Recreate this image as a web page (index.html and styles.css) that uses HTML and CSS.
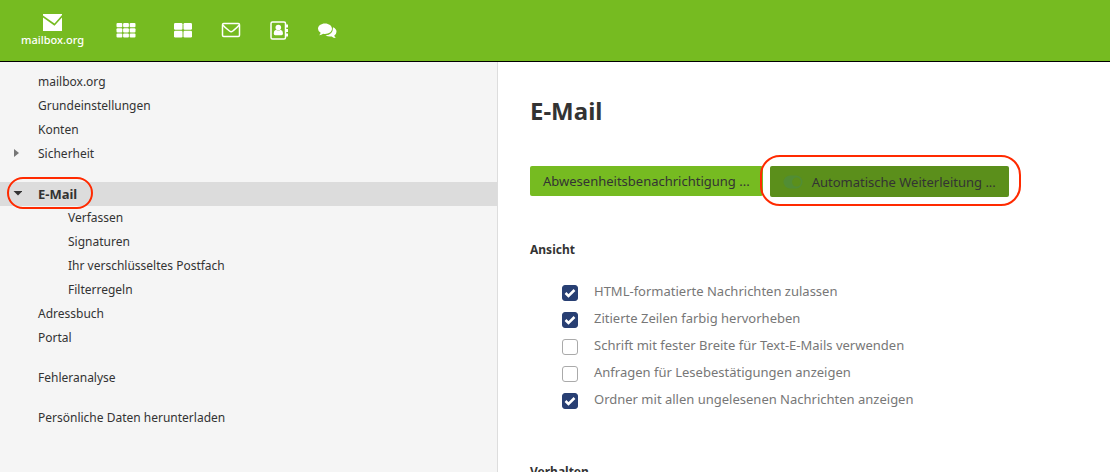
FILE: index.html
```html
<!DOCTYPE html>
<html lang="de">
<head>
<meta charset="utf-8">
<meta name="viewport" content="width=device-width, initial-scale=1">
<title>mailbox.org – E-Mail</title>
<link rel="stylesheet" href="styles.css">
</head>
<body>
<header class="topbar">
  <a class="brand" href="#">
    <svg class="brand-mark" viewBox="0 0 19 17" aria-hidden="true"><path fill="#fff" d="M0 0h19v1L11.500 9.500 0 1.500zM0 3.500l11.500 8.200L19 3.500V17H0z"/></svg>
    <span class="brand-name">mailbox.org</span>
  </a>
  <nav class="apps">
    <button class="app" type="button" aria-label="Apps">
      <svg class="app-icon" viewBox="0 0 20 20" fill="#fff"><rect x="0.500" y="2" width="5.800" height="4.200" rx="1"/><rect x="7.100" y="2" width="5.800" height="4.200" rx="1"/><rect x="13.700" y="2" width="5.800" height="4.200" rx="1"/><rect x="0.500" y="7.200" width="5.800" height="4.200" rx="1"/><rect x="7.100" y="7.200" width="5.800" height="4.200" rx="1"/><rect x="13.700" y="7.200" width="5.800" height="4.200" rx="1"/><rect x="0.500" y="12.400" width="5.800" height="4.200" rx="1"/><rect x="7.100" y="12.400" width="5.800" height="4.200" rx="1"/><rect x="13.700" y="12.400" width="5.800" height="4.200" rx="1"/></svg>
    </button>
    <button class="app" type="button" aria-label="Portal">
      <svg class="app-icon" viewBox="0 0 20 20" fill="#fff"><rect x="1" y="2" width="8.500" height="6.700" rx="1.200"/><rect x="10.500" y="2" width="8.500" height="6.700" rx="1.200"/><rect x="1" y="9.800" width="8.500" height="6.700" rx="1.200"/><rect x="10.500" y="9.800" width="8.500" height="6.700" rx="1.200"/></svg>
    </button>
    <button class="app" type="button" aria-label="E-Mail">
      <svg class="app-icon" viewBox="0 0 20 20" fill="none" stroke="#fff" stroke-width="1.500"><rect x="1.500" y="2.500" width="17" height="13" rx="1.200"/><path d="M1.800 4C4 6.500 6.500 8.300 8.500 10q1.600 1.300 3.200 0C13.700 8.300 16.200 6.500 18.300 4"/></svg>
    </button>
    <button class="app" type="button" aria-label="Adressbuch">
      <svg class="app-icon" viewBox="0 0 20 20" fill="#fff"><rect x="2" y="1" width="14.500" height="17" rx="1.500" fill="none" stroke="#fff" stroke-width="1.500"/><path d="M17 3.500h2v3h-2zM17 8h2v3h-2zM17 12.500h2v3h-2z"/><circle cx="9.300" cy="6.600" r="2.800"/><path d="M7 8.800q2.300 1.800 4.600 0 2.400.5 2.400 3.500 0 2-1.500 2H6.200q-1.500 0-1.500-2 0-3 2.300-3.500z"/></svg>
    </button>
    <button class="app" type="button" aria-label="Chat">
      <svg class="app-icon" viewBox="0 0 20 20" fill="#fff"><path d="M8 2.500c4 0 7 2.300 7 5.200s-3 5.200-7 5.200q-1 0-1.800-.2Q4.500 14 2 14.200q1.300-1 1.600-2.500Q1 10.200 1 7.700C1 4.800 4 2.500 8 2.500z"/><path d="M16 6.200q3.500 1.500 3.500 4.500 0 2.300-2.200 3.700.3 1.500 1.600 2.500-2.500 0-4.200-1.500-3.500.6-6.200-1.200 7.500-.3 7.500-8z"/></svg>
    </button>
  </nav>
</header>
<div class="workspace">
  <nav class="sidebar">
    <ul class="tree">
      <li><a class="item" href="#">mailbox.org</a></li>
      <li><a class="item" href="#">Grundeinstellungen</a></li>
      <li><a class="item" href="#">Konten</a></li>
      <li><a class="item" href="#"><svg class="caret" viewBox="0 0 10 10"><path fill="#777" d="M2 1v8l5-4z"/></svg>Sicherheit</a></li>
    </ul>
    <ul class="tree">
      <li><a class="item item-active" href="#"><svg class="caret" viewBox="0 0 10 10"><path fill="#333" d="M1.500 3h9L6 7.500z"/></svg>E-Mail</a>
        <ul class="subtree">
          <li><a class="item" href="#">Verfassen</a></li>
          <li><a class="item" href="#">Signaturen</a></li>
          <li><a class="item" href="#">Ihr verschlüsseltes Postfach</a></li>
          <li><a class="item" href="#">Filterregeln</a></li>
        </ul>
      </li>
      <li><a class="item" href="#">Adressbuch</a></li>
      <li><a class="item" href="#">Portal</a></li>
    </ul>
    <ul class="tree"><li><a class="item" href="#">Fehleranalyse</a></li></ul>
    <ul class="tree"><li><a class="item" href="#">Persönliche Daten herunterladen</a></li></ul>
  </nav>
  <main class="content">
    <h1 class="title">E-Mail</h1>
    <div class="actions">
      <button class="btn" type="button">Abwesenheitsbenachrichtigung ...</button>
      <span class="marked"><button class="btn btn-dark" type="button"><svg class="toggle" viewBox="0 0 20 14"><rect x=".5" y=".5" width="19" height="13" rx="6.500" fill="#518d34"/><circle cx="13.500" cy="7" r="4.500" fill="#5b8f1b"/></svg>Automatische Weiterleitung ...</button></span>
    </div>
    <section class="group">
      <h2 class="group-title">Ansicht</h2>
      <div class="options">
        <label class="option"><input class="check" type="checkbox" checked>HTML-formatierte Nachrichten zulassen</label>
        <label class="option"><input class="check" type="checkbox" checked>Zitierte Zeilen farbig hervorheben</label>
        <label class="option"><input class="check" type="checkbox">Schrift mit fester Breite für Text-E-Mails verwenden</label>
        <label class="option"><input class="check" type="checkbox">Anfragen für Lesebestätigungen anzeigen</label>
        <label class="option"><input class="check" type="checkbox" checked>Ordner mit allen ungelesenen Nachrichten anzeigen</label>
      </div>
    </section>
    <section class="group">
      <h2 class="group-title">Verhalten</h2>
    </section>
  </main>
</div>
</body>
</html>
```
FILE: styles.css
```css
*, *::before, *::after { box-sizing: border-box; }

body {
  margin: 0;
  height: 100vh;
  display: flex;
  flex-direction: column;
  overflow: hidden;
  background: #fff;
  color: #333;
  font-family: "Noto Sans", "Open Sans", sans-serif;
  font-size: 12px;
}

.topbar {
  display: flex;
  flex: none;
  align-items: center;
  gap: 18px;
  padding: 0 21px;
  height: 62px;
  background: #76bb21;
  border-bottom: 1px solid #000;
}

.brand {
  display: flex;
  flex-direction: column;
  align-items: center;
  gap: 1px;
  color: #fff;
  text-decoration: none;
}

.brand-mark { width: 19px; height: 17px; }

.brand-name {
  font-size: 11px;
  font-weight: 500;
  line-height: 16px;
}

.apps { display: flex; flex: 1; }

.app {
  display: flex;
  align-items: center;
  justify-content: center;
  width: 48px;
  height: 48px;
  padding: 0;
  border: 0;
  background: none;
}

.app:first-child { margin-right: 9px; }

.app-icon { width: 20px; height: 20px; }

.workspace { display: flex; flex: 1; min-height: 0; }

.sidebar {
  display: flex;
  flex: 0 0 498px;
  flex-direction: column;
  gap: 16px;
  padding-top: 8px;
  background: #f5f5f5;
  border-right: 1px solid #ddd;
}

.tree, .subtree { margin: 0; padding: 0; list-style: none; }

.item {
  display: block;
  position: relative;
  padding-left: 38px;
  color: #333;
  line-height: 24px;
  text-decoration: none;
}

.subtree .item { padding-left: 68px; }

.item-active {
  background: #dcdcdc;
  font-size: 13px;
  font-weight: 700;
}

.caret {
  position: absolute;
  top: 6px;
  left: 12px;
  width: 10px;
  height: 10px;
}

.item-active::after {
  content: "";
  position: absolute;
  z-index: 1;
  top: -5px;
  left: 7px;
  width: 86px;
  height: 32px;
  border: 2px solid #ff2a00;
  border-radius: 16px;
}

.content { flex: 1; padding: 32px; overflow: hidden; }

.title {
  margin: 0 0 38px;
  font-size: 24px;
  font-weight: 700;
  line-height: 34px;
}

.actions { display: flex; gap: 7px; align-items: flex-start; }

.btn {
  display: flex;
  align-items: center;
  height: 30px;
  padding: 0 13px;
  border: 0;
  border-radius: 2px;
  background: #76bb21;
  color: #333;
  font-family: inherit;
  font-size: 13px;
  white-space: nowrap;
}

.btn-dark { height: 31px; background: #5b8f1b; }

.toggle { flex: none; width: 20px; height: 14px; margin-right: 9px; }

.marked { position: relative; }

.marked::after {
  content: "";
  position: absolute;
  inset: -11px -12px -9px -10px;
  border: 2px solid #ff2a00;
  border-radius: 20px;
  pointer-events: none;
}

.group { margin-top: 42px; }

.group-title {
  margin: 0;
  font-size: 12px;
  font-weight: 700;
  line-height: 22px;
}

.options { padding: 16px 0 7px 32px; }

.option {
  display: flex;
  align-items: center;
  gap: 16px;
  height: 27px;
  color: #777;
  font-size: 13px;
}

.check {
  flex: none;
  width: 16px;
  height: 16px;
  margin: 4px 0 0;
  appearance: none;
  border: 1px solid #aaa;
  border-radius: 3px;
  background: #fff;
}

.check:checked {
  border-color: #283f73;
  background: #283f73 url("data:image/svg+xml,%3Csvg xmlns='http://www.w3.org/2000/svg' viewBox='0 0 14 14'%3E%3Cpath d='M2.500 7l3 3 6-6' fill='none' stroke='white' stroke-width='2.500'/%3E%3C/svg%3E") center / 14px 14px no-repeat;
}
```
